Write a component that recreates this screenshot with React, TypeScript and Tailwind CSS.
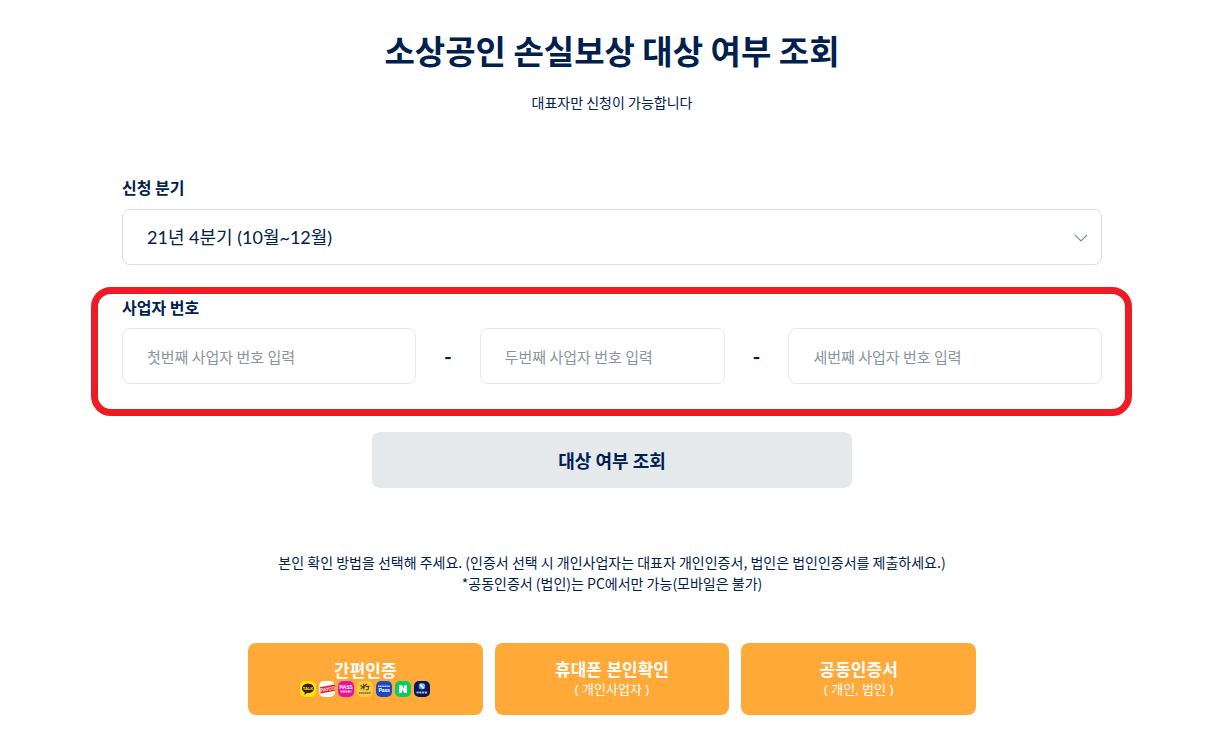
import { useState } from "react";

const KakaoIcon = () => (
  <svg className="size-4" viewBox="0 0 16 16" aria-hidden="true">
    <rect width="16" height="16" rx="5" fill="#fae300" />
    <path
      d="M8 2.8c-3.4 0-6 2-6 4.6 0 1.7 1.1 3.1 2.8 3.9l-.5 2.4 2.7-1.8 1 .1c3.4 0 6-2 6-4.6s-2.6-4.6-6-4.6z"
      fill="#371c1d"
    />
    <text x="8" y="9" fontSize="4.2" fontWeight="900" textAnchor="middle" fill="#fae300">
      TALK
    </text>
  </svg>
);

const PaycoIcon = () => (
  <svg className="size-4" viewBox="0 0 16 16" aria-hidden="true">
    <rect width="16" height="16" rx="5" fill="#ffffff" />
    <path d="M1 6.2 16 3.6v6.2L1.6 12.4z" fill="#ed1c24" />
    <text
      x="8.7"
      y="9.7"
      fontSize="4.6"
      fontWeight="900"
      textAnchor="middle"
      fill="#ffffff"
      transform="rotate(-9 8.5 8)"
    >
      PAYCO
    </text>
  </svg>
);

const PassIcon = () => (
  <svg className="size-4" viewBox="0 0 16 16" aria-hidden="true">
    <rect width="16" height="16" rx="5" fill="#e6149b" />
    <text x="8" y="7.6" fontSize="5.6" fontWeight="900" textAnchor="middle" fill="#ffffff">
      PASS
    </text>
    <path d="M2.5 10.5h11" stroke="#ffffff" strokeWidth="1.8" strokeDasharray="2 .5" opacity=".75" />
  </svg>
);

const KbIcon = () => (
  <svg className="size-4" viewBox="0 0 16 16" aria-hidden="true">
    <rect width="16" height="16" rx="5" fill="#f9c93e" />
    <path
      d="M3.4 4.4 8 6.4M6.6 2.8 6.8 8.8M9.8 3 3.8 8M8.6 5.4h4M9 8.3a1.6 1.6 0 1 0 .8-2.8"
      fill="none"
      stroke="#584a37"
      strokeWidth="1.1"
    />
    <path d="M2 12h12" stroke="#7c6835" strokeWidth="1.6" strokeDasharray="1.6 .4" />
  </svg>
);

const SamsungIcon = () => (
  <svg className="size-4" viewBox="0 0 16 16" aria-hidden="true">
    <rect width="16" height="16" rx="5" fill="#1c49c2" />
    <path d="M2 5.2h12" stroke="#ffffff" strokeWidth="1.4" strokeDasharray="1.4 .3" opacity=".7" />
    <text x="8" y="11.4" fontSize="5.6" fontWeight="900" textAnchor="middle" fill="#ffffff">
      Pass
    </text>
  </svg>
);

const NaverIcon = () => (
  <svg className="size-4" viewBox="0 0 16 16" aria-hidden="true">
    <rect width="16" height="16" rx="5" fill="#05cf5c" />
    <path d="M4 4h2.8l2.4 3.7V4H12v8H9.3L6.8 8.3V12H4z" fill="#ffffff" />
  </svg>
);

const ShinhanIcon = () => (
  <svg className="size-4" viewBox="0 0 16 16" aria-hidden="true">
    <rect width="16" height="16" rx="5" fill="#06175f" />
    <circle cx="8" cy="5.3" r="3.3" fill="#3ea5e0" />
    <path d="M6.2 3.4 9.6 7.4" fill="none" stroke="#ffffff" strokeWidth="1.8" />
    <path d="M8.6 2.8 10.4 4.6" fill="none" stroke="#f3e3a5" strokeWidth="1" />
    <path d="M2.5 11.5h11" stroke="#ffffff" strokeWidth="2" strokeDasharray="2.2 .6" opacity=".7" />
  </svg>
);

const numberFields = [
  { id: "biz-first", placeholder: "첫번째 사업자 번호 입력", width: "w-[30%]" },
  { id: "biz-second", placeholder: "두번째 사업자 번호 입력", width: "w-[25%]" },
  { id: "biz-third", placeholder: "세번째 사업자 번호 입력", width: "w-[32%]" },
];

const authButton =
  "flex h-[72px] flex-1 cursor-pointer flex-col items-center justify-center rounded-lg bg-[#ffa939] font-['Noto_Sans','Noto_Sans_CJK_KR',sans-serif] text-white";

const App = () => {
  const [quarter, setQuarter] = useState("2021-4");

  return (
    <main className="pr-5 pl-[30px] pt-[26px] pb-5 font-['Noto_Sans_CJK_KR',sans-serif] text-[#00204e]">
      <header className="text-center">
        <h1 className="text-[33px] leading-[48px] font-bold">
          소상공인 손실보상 대상 여부 조회
        </h1>
        <p className="mt-[18px] text-sm leading-[21px]">대표자만 신청이 가능합니다</p>
      </header>

      <form className="mx-auto mt-16 max-w-[980px]" onSubmit={(e) => e.preventDefault()}>
        <label htmlFor="quarter" className="block text-base leading-5 font-bold">
          신청 분기
        </label>
        <div className="relative mt-3">
          <select
            id="quarter"
            value={quarter}
            onChange={(e) => setQuarter(e.target.value)}
            className="block h-14 w-full appearance-none rounded-lg border border-[#d9deeb] bg-white px-6 font-['Lato','Noto_Sans_CJK_KR',sans-serif] text-lg"
          >
            <option value="2021-4">21년 4분기 (10월~12월)</option>
          </select>
          <svg
            className="pointer-events-none absolute top-[25px] right-3.5 h-2 w-3.5"
            viewBox="0 0 14 8"
            fill="none"
            stroke="#7e8ca3"
            strokeWidth="1.2"
            aria-hidden="true"
          >
            <path d="m1 1 6 6 6-6" />
          </svg>
        </div>

        <div role="group" aria-labelledby="biz-label" className="relative mt-8">
          <div id="biz-label" className="text-base leading-5 font-bold">
            사업자 번호
          </div>
          <div className="mt-[11px] flex items-center">
            {numberFields.map((field, i) => (
              <div key={field.id} className="contents">
                {i > 0 && (
                  <span className="flex-1 text-center text-xl leading-6 font-bold">-</span>
                )}
                <input
                  id={field.id}
                  type="text"
                  inputMode="numeric"
                  aria-label={field.placeholder}
                  placeholder={field.placeholder}
                  className={`h-14 rounded-lg border border-[#e5e8eb] px-6 text-[15px] placeholder:text-[#8a949e] ${field.width}`}
                />
              </div>
            ))}
          </div>
          <div className="pointer-events-none absolute -top-2.5 -right-[30px] -bottom-8 -left-[31px] rounded-[20px] border-7 border-[#ed1c24]" />
        </div>

        <button
          type="submit"
          className="mx-auto mt-12 block h-14 w-full max-w-[480px] cursor-pointer rounded-lg bg-[#e6e9ec] text-lg font-bold"
        >
          대상 여부 조회
        </button>
      </form>

      <p className="mt-16 text-center text-sm leading-[21px]">
        본인 확인 방법을 선택해 주세요. (인증서 선택 시 개인사업자는 대표자 개인인증서, 법인은 법인인증서를 제출하세요.)
        <br />
        *공동인증서 (법인)는 PC에서만 가능(모바일은 불가)
      </p>

      <div className="mx-auto mt-[49px] flex max-w-[728px] gap-3">
        <button type="button" className={authButton}>
          <span className="text-[17px] leading-5 font-bold">간편인증</span>
          <span className="flex gap-[3px] font-['Lato',sans-serif]">
            <KakaoIcon />
            <PaycoIcon />
            <PassIcon />
            <KbIcon />
            <SamsungIcon />
            <NaverIcon />
            <ShinhanIcon />
          </span>
        </button>
        <button type="button" className={authButton}>
          <span className="text-[17px] leading-5 font-bold">휴대폰 본인확인</span>
          <span className="text-[13px] leading-[18px]">( 개인사업자 )</span>
        </button>
        <button type="button" className={authButton}>
          <span className="text-[17px] leading-5 font-bold">공동인증서</span>
          <span className="text-[13px] leading-[18px]">( 개인, 법인 )</span>
        </button>
      </div>
    </main>
  );
};

export default App;
